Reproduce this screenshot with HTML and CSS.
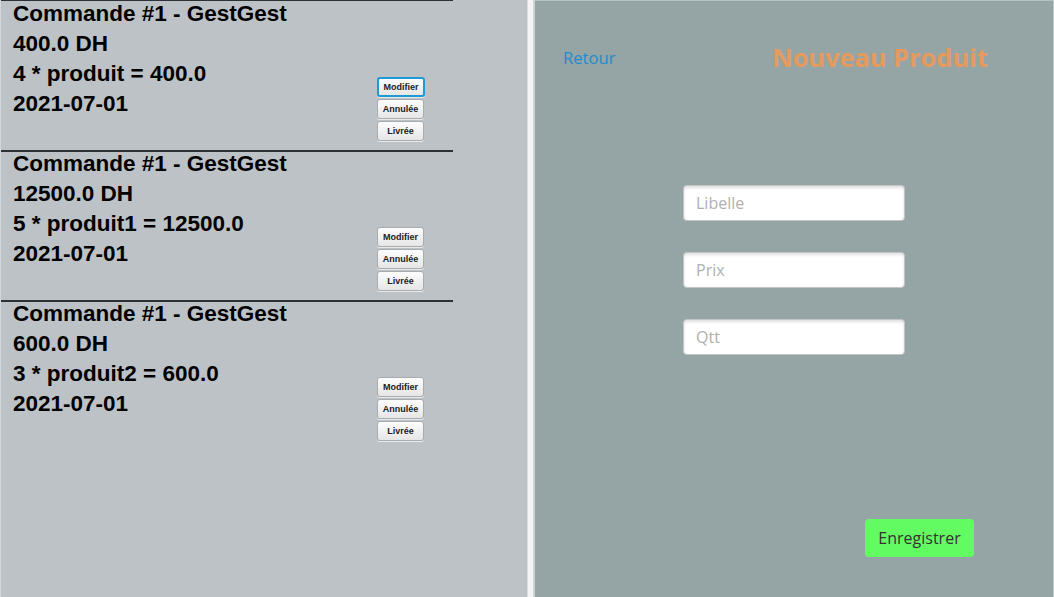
FILE: index.html
```html
<!DOCTYPE html>
<html lang="fr">
<head>
<meta charset="utf-8">
<title>GestGest</title>
<link rel="stylesheet" href="styles.css">
</head>
<body>
<div class="app">
  <div class="left">
    <div class="card">
      <div class="info">
        <div>Commande #1 - GestGest</div>
        <div>400.0 DH</div>
        <div>4 * produit = 400.0</div>
        <div>2021-07-01</div>
      </div>
      <div class="actions">
        <button class="sbtn focused">Modifier</button>
        <button class="sbtn">Annulée</button>
        <button class="sbtn">Livrée</button>
      </div>
    </div>
    <div class="card">
      <div class="info">
        <div>Commande #1 - GestGest</div>
        <div>12500.0 DH</div>
        <div>5 * produit1 = 12500.0</div>
        <div>2021-07-01</div>
      </div>
      <div class="actions">
        <button class="sbtn">Modifier</button>
        <button class="sbtn">Annulée</button>
        <button class="sbtn">Livrée</button>
      </div>
    </div>
    <div class="card">
      <div class="info">
        <div>Commande #1 - GestGest</div>
        <div>600.0 DH</div>
        <div>3 * produit2 = 600.0</div>
        <div>2021-07-01</div>
      </div>
      <div class="actions">
        <button class="sbtn">Modifier</button>
        <button class="sbtn">Annulée</button>
        <button class="sbtn">Livrée</button>
      </div>
    </div>
  </div>
  <div class="splitter"></div>
  <div class="right">
    <div class="header">
      <a class="back">Retour</a>
      <h1 class="title">Nouveau Produit</h1>
    </div>
    <div class="form">
      <input class="field" type="text" placeholder="Libelle">
      <input class="field" type="text" placeholder="Prix">
      <input class="field" type="text" placeholder="Qtt">
    </div>
    <div class="footer">
      <button class="save">Enregistrer</button>
    </div>
  </div>
</div>
</body>
</html>
```

FILE: styles.css
```css
html, body {
  margin: 0;
  padding: 0;
  width: 1054px;
  height: 597px;
  overflow: hidden;
}

.app {
  display: flex;
  width: 1054px;
  height: 597px;
}

.left {
  width: 526px;
  background: #bdc2c6;
  border-left: 1px solid #d3d6d9;
  display: flex;
  flex-direction: column;
}

.card {
  width: 440px;
  height: 148px;
  border-top: 2px solid #2e3133;
  display: flex;
  padding-left: 12px;
}

.card:first-child {
  height: 149px;
  border-top: 1px solid #2e3133;
}

.card:first-child .info {
  margin-top: -2px;
}

.card:first-child .actions {
  margin-top: 76px;
}

.info {
  width: 364px;
  margin-top: -3px;
  font-family: "Liberation Sans", Arial, sans-serif;
  font-weight: bold;
  font-size: 22.5px;
  line-height: 30px;
  color: #000;
}

.actions {
  display: flex;
  flex-direction: column;
  gap: 2px;
  margin-top: 75px;
}

.sbtn {
  width: 47px;
  height: 20px;
  padding: 0;
  font-family: "Liberation Sans", Arial, sans-serif;
  font-weight: bold;
  font-size: 9px;
  color: #222;
  background: linear-gradient(#fdfdfd, #e6e6e6);
  border: 1px solid #a9acae;
  border-radius: 3px;
  box-shadow: 0 1px 0 #e8eaeb;
}

.sbtn.focused {
  width: 48px;
  border: 2px solid #1e9ad6;
}

.splitter {
  width: 8px;
  background: #f4f4f4;
  border-left: 1px solid #d9dbdc;
  border-right: 2px solid #cfd3d4;
  box-sizing: border-box;
}

.right {
  flex: 1;
  background: #95a5a6;
  border-top: 1px solid #b8c3c4;
  border-right: 1px solid #c3cccd;
  display: flex;
  flex-direction: column;
  font-family: "Open Sans", "Noto Sans", sans-serif;
}

.header {
  display: flex;
  align-items: center;
  height: 30px;
  margin-top: 41px;
  padding-left: 28px;
}

.back {
  font-size: 16.6px;
  color: #1f8ccd;
  width: 209px;
}

.title {
  margin: 0;
  font-size: 25.4px;
  font-weight: bold;
  color: #e59a5e;
}

.form {
  display: flex;
  flex-direction: column;
  align-items: center;
  gap: 31px;
  margin-top: 113px;
}

.field {
  width: 222px;
  height: 36px;
  box-sizing: border-box;
  border: 1px solid #c4c4c4;
  border-radius: 4px;
  background: #fff;
  box-shadow: inset 0 2px 3px rgba(0,0,0,0.12);
  padding: 0 12px;
  font-family: "Open Sans", "Noto Sans", sans-serif;
  font-size: 16px;
  color: #333;
  outline: none;
}

.field::placeholder {
  color: #b0b0b0;
}

.footer {
  display: flex;
  justify-content: flex-end;
  padding-right: 79px;
  margin-top: 164px;
}

.save {
  width: 109px;
  height: 38px;
  border: none;
  border-radius: 4px;
  background: #63fb62;
  font-family: "Open Sans", "Noto Sans", sans-serif;
  font-size: 16px;
  color: #333;
  padding: 0;
}
```
